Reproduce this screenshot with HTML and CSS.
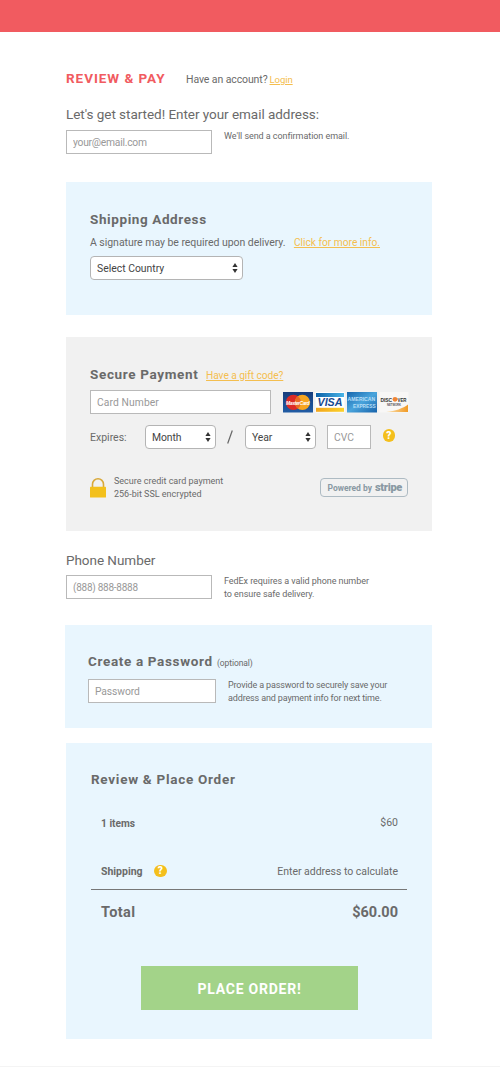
FILE: index.html
```html
<!DOCTYPE html>
<html lang="en">
<head>
<meta charset="utf-8">
<title>Review &amp; Pay</title>
<link rel="stylesheet" href="styles.css">
</head>
<body>
<header class="topbar"></header>
<main class="checkout">
  <section class="intro">
    <div class="title-row">
      <h1 class="page-title">REVIEW &amp; PAY</h1>
      <span class="account">Have an account?</span>
      <a class="link login" href="#">Login</a>
    </div>
    <h2 class="lead email-lead">Let's get started! Enter your email address:</h2>
    <div class="field-row">
      <input class="field email" type="text" placeholder="your@email.com">
      <p class="note email-note">We'll send a confirmation email.</p>
    </div>
  </section>

  <section class="panel shipping">
    <h2 class="panel-title ship-title">Shipping Address</h2>
    <div class="sub-row">
      <span class="signature">A signature may be required upon delivery.</span>
      <a class="link more-info" href="#">Click for more info.</a>
    </div>
    <div class="select country"><span class="country-text">Select Country</span><svg class="arrows" viewBox="0 0 6 10"><path d="M3 0 5.6 4H.4zM3 10 .4 6h5.2z"/></svg></div>
  </section>

  <section class="panel payment">
    <div class="payment-head">
      <h2 class="panel-title pay-title">Secure Payment</h2>
      <a class="link gift" href="#">Have a gift code?</a>
    </div>
    <div class="card-row">
      <input class="field card-number" type="text" placeholder="Card Number">
      <svg class="cards" viewBox="0 0 126 21">
        <defs>
          <linearGradient id="mc" x1="0" y1="0" x2="0" y2="1"><stop offset="0" stop-color="#173d7c"/><stop offset="1" stop-color="#225da5"/></linearGradient>
          <linearGradient id="ax" x1="0" y1="0" x2="1" y2="1"><stop offset="0" stop-color="#1666ad"/><stop offset=".5" stop-color="#49a4dc"/><stop offset="1" stop-color="#1762aa"/></linearGradient>
          <linearGradient id="vb" x1="0" y1="0" x2="1" y2="0"><stop offset="0" stop-color="#0c61a8"/><stop offset="1" stop-color="#49b4e6"/></linearGradient>
          <linearGradient id="vy" x1="0" y1="0" x2="1" y2="0"><stop offset="0" stop-color="#f2a51c"/><stop offset="1" stop-color="#fbd22c"/></linearGradient>
          <linearGradient id="ds" x1="0" y1="0" x2="1" y2="0"><stop offset="0" stop-color="#fbe3b4"/><stop offset="1" stop-color="#f19a24"/></linearGradient>
        </defs>
        <rect width="30" height="20.5" fill="url(#mc)"/>
        <circle cx="10.4" cy="10.4" r="7.7" fill="#dc2a26"/>
        <circle cx="19.4" cy="10.4" r="7.7" fill="#f7a51f"/>
        <path d="M14.9 4.2a7.7 7.7 0 0 1 0 12.4a7.7 7.7 0 0 1 0-12.4" fill="#e96a25"/>
        <text x="3.1" y="12.5" class="mc-name" textLength="23.5">MasterCard</text>
        <rect x="32.5" width="29" height="20.5" fill="#fff"/>
        <rect x="33" y="1" width="28" height="4" fill="url(#vb)"/>
        <rect x="33" y="15.8" width="28" height="4" fill="url(#vy)"/>
        <text x="34.5" y="14.4" class="visa-name" textLength="25" lengthAdjust="spacingAndGlyphs">VISA</text>
        <rect x="64" width="30" height="20.5" fill="url(#ax)"/>
        <text x="64.6" y="9.2" class="amex-name" textLength="27.6" lengthAdjust="spacingAndGlyphs">AMERICAN</text>
        <text x="70" y="15.9" class="amex-name" textLength="22.6" lengthAdjust="spacingAndGlyphs">EXPRESS</text>
        <rect x="96.3" width="29.2" height="20.5" fill="#f8f7f6"/>
        <path d="M125 12.5V20h-22c9-1 17-3.5 22-7.5" fill="url(#ds)"/>
        <circle cx="112" cy="7.3" r="2.4" fill="#ef8536"/>
        <text x="97.4" y="9.6" class="disc-name" textLength="11.8" lengthAdjust="spacingAndGlyphs">DISC</text>
        <text x="114.5" y="9.6" class="disc-name" textLength="9" lengthAdjust="spacingAndGlyphs">VER</text>
        <text x="104" y="13.6" class="disc-net" textLength="14" lengthAdjust="spacingAndGlyphs">NETWORK</text>
      </svg>
    </div>
    <div class="expires-row">
      <span class="expires">Expires:</span>
      <div class="select month"><span class="month-text">Month</span><svg class="arrows" viewBox="0 0 6 10"><path d="M3 0 5.6 4H.4zM3 10 .4 6h5.2z"/></svg></div>
      <svg class="slash" viewBox="0 0 6 14"><path d="M5.3.5.7 13.5"/></svg>
      <div class="select year"><span class="year-text">Year</span><svg class="arrows" viewBox="0 0 6 10"><path d="M3 0 5.6 4H.4zM3 10 .4 6h5.2z"/></svg></div>
      <input class="field cvc" type="text" placeholder="CVC">
      <span class="help cvc-help">?</span>
    </div>
    <div class="secure-row">
      <svg class="lock" viewBox="0 0 16 20"><path d="M2.5 10V6.3a5.5 5.5 0 0 1 11 0V10" fill="none" stroke="#d9a93a" stroke-width="1.6"/><rect y="8.7" width="16" height="10.8" rx=".6" fill="#f3c01c"/></svg>
      <p class="secure-text"><span class="sec-a">Secure credit card payment</span><br><span class="sec-b">256-bit SSL encrypted</span></p>
      <span class="stripe"><span class="powered">Powered by</span><b class="stripe-name">stripe</b></span>
    </div>
  </section>

  <section class="phone">
    <h2 class="lead phone-lead">Phone Number</h2>
    <div class="field-row">
      <input class="field tel" type="text" placeholder="(888) 888-8888">
      <p class="note"><span class="fed-a">FedEx requires a valid phone number</span><br><span class="fed-b">to ensure safe delivery.</span></p>
    </div>
  </section>

  <section class="panel password">
    <div class="password-head">
      <h2 class="panel-title pass-title">Create a Password</h2>
      <span class="optional">(optional)</span>
    </div>
    <div class="field-row">
      <input class="field pass" type="text" placeholder="Password">
      <p class="note pass-note"><span class="pw-a">Provide a password to securely save your</span><br><span class="pw-b">address and payment info for next time.</span></p>
    </div>
  </section>

  <section class="panel order">
    <h2 class="panel-title order-title">Review &amp; Place Order</h2>
    <div class="line items"><b class="items-label">1 items</b><span class="items-price">$60</span></div>
    <div class="line ship-line"><b class="ship-label">Shipping</b><span class="help">?</span><span class="calc">Enter address to calculate</span></div>
    <div class="line total"><b class="total-label">Total</b><b class="total-price">$60.00</b></div>
    <button class="place" type="button">PLACE ORDER!</button>
  </section>
</main>
<footer class="foot"></footer>
</body>
</html>
```

FILE: styles.css
```css
* { box-sizing: border-box; }
body { margin: 0; height: 1067px; overflow: hidden; background: #fff; color: #6a6a6a; font-family: Roboto, "Liberation Sans", sans-serif; font-size: 10.5px; }
h1, h2, p { margin: 0; }
.topbar { height: 32px; background: #f15b60; }
.checkout { width: 366px; margin-left: 66px; white-space: nowrap; }
.link { color: #f4be4f; text-decoration: underline; }

.intro { height: 150px; padding-top: 36px; }
.title-row { display: flex; align-items: baseline; height: 20px; line-height: 20px; }
.page-title { width: 120px; font-size: 13.5px; font-weight: 700; color: #f15b60; letter-spacing: .95px; }
.account { width: 83.5px; letter-spacing: -.1px; }
.login { font-size: 9.6px; letter-spacing: -.1px; }
.lead { font-size: 13.5px; font-weight: 400; line-height: 20px; letter-spacing: -.04px; }
.email-lead { margin-top: 16px; }
.field-row { display: flex; }
.intro .field-row { margin-top: 6px; }
.field { display: block; height: 24px; margin: 0; padding: 0 6px; border: 1px solid #b9b9b9; border-radius: 0; background: #fff; font-family: inherit; font-size: 10.3px; }
.field::placeholder { color: #999; opacity: 1; }
.email, .tel { width: 146px; letter-spacing: -.25px; }
.tel { font-size: 10px; }
.note { margin-left: 12px; font-size: 9px; line-height: 12.5px; letter-spacing: -.06px; }

.panel { background: #e9f6fe; }
.panel-title { font-size: 13.5px; font-weight: 700; line-height: 20px; letter-spacing: .65px; }
.ship-title { letter-spacing: .6px; }
.shipping { height: 133px; padding: 27px 24px 0; }
.sub-row { display: flex; justify-content: space-between; width: 290px; margin-top: 5px; line-height: 17px; }
.signature { letter-spacing: -.04px; }
.more-info, .gift { font-size: 10.2px; }
.gift { letter-spacing: -.06px; }
.select { display: flex; align-items: center; justify-content: space-between; height: 24px; padding: 0 4px 0 6px; border: 1px solid #b4b4b4; border-radius: 4px; background: #fff; color: #444; font-size: 10.4px; }
.arrows { width: 6px; height: 10px; fill: #333; }
.country { width: 153px; margin-top: 5px; }

.payment { height: 194px; margin-top: 22px; padding: 27px 24px 0; background: #f1f1f1; }
.payment-head { display: flex; align-items: baseline; height: 20px; }
.pay-title { width: 116px; }
.card-row { display: flex; align-items: center; margin-top: 6px; }
.card-number { width: 182px; letter-spacing: .1px; }
.cards { width: 126px; height: 21px; margin-left: 11px; flex: none; overflow: visible; transform: translateX(1px); }
.mc-name { font: italic 700 5px "Liberation Sans", sans-serif; fill: #fff; }
.visa-name { font: italic 700 10.5px "Liberation Sans", sans-serif; fill: #174a91; }
.amex-name { font: 700 5.6px "Liberation Sans", sans-serif; fill: #b9dff6; }
.disc-name { font: 700 6.2px "Liberation Sans", sans-serif; fill: #333; }
.disc-net { font: 700 3px "Liberation Sans", sans-serif; fill: #555; }
.expires-row { display: flex; align-items: center; margin-top: 11px; }
.expires { width: 55px; }
.month, .year { width: 71px; letter-spacing: -.1px; }
.slash { width: 6px; height: 14px; margin: 0 12px 0 11px; fill: none; stroke: #666; stroke-width: 1.2px; }
.cvc { width: 44px; margin-left: 11px; }
.help { display: flex; flex: none; align-items: center; justify-content: center; width: 12.5px; height: 12.5px; border-radius: 50%; background: #f4bf1c; color: #fff; font-size: 10px; font-weight: 900; line-height: 12px; }
.cvc-help { margin: -3px 0 0 11.5px; }
.secure-row { display: flex; margin-top: 26px; }
.lock { width: 16px; height: 20px; margin-top: 3px; }
.secure-text { width: 206px; margin-left: 8px; font-size: 9px; line-height: 13px; }
.stripe { display: flex; align-items: center; width: 88px; height: 19px; margin-top: 3px; padding-left: 6.5px; border: 1px solid #aebbc3; border-radius: 4px; color: #8999a3; }
.powered { width: 47.5px; font-size: 8.5px; font-weight: 700; letter-spacing: -.02px; }
.stripe-name { font-size: 11px; font-weight: 900; letter-spacing: -.3px; }

.phone { height: 94px; padding-top: 19px; }
.phone .field-row { margin-top: 5px; }

.password { width: 367px; height: 103px; margin-left: -1px; padding: 26px 23px 0; }
.password-head { display: flex; align-items: baseline; height: 20px; }
.pass-title { width: 129px; }
.optional { font-size: 8.5px; letter-spacing: -.1px; }
.password .field-row { margin-top: 8px; }
.pass { width: 128px; letter-spacing: -.1px; }
.pass-note { letter-spacing: -.14px; }

.order { height: 296px; margin-top: 15px; padding: 26px 25px 0; }
.order-title { letter-spacing: .72px; }
.line { display: flex; align-items: center; height: 20px; padding: 0 9px 0 10px; }
.items { justify-content: space-between; margin-top: 24px; }
.items-label { font-size: 10.2px; }
.items-price { margin-top: -2px; }
.ship-line { height: 37px; margin-top: 20px; border-bottom: 1px solid #777; }
.ship-line .help { margin-left: 11.5px; }
.calc { margin-left: auto; letter-spacing: -.02px; }
.total { justify-content: space-between; margin-top: 12px; font-size: 14.5px; }
.total-label { letter-spacing: .4px; }
.place { display: block; width: 217px; height: 44px; margin: 44px 0 0 50px; padding: 2px 0 0; border: 0; background: #a3d389; color: #fff; font-family: inherit; font-size: 14px; font-weight: 700; letter-spacing: .75px; }
.foot { height: 1px; margin-top: 27px; background: #f4f4f4; }
```
